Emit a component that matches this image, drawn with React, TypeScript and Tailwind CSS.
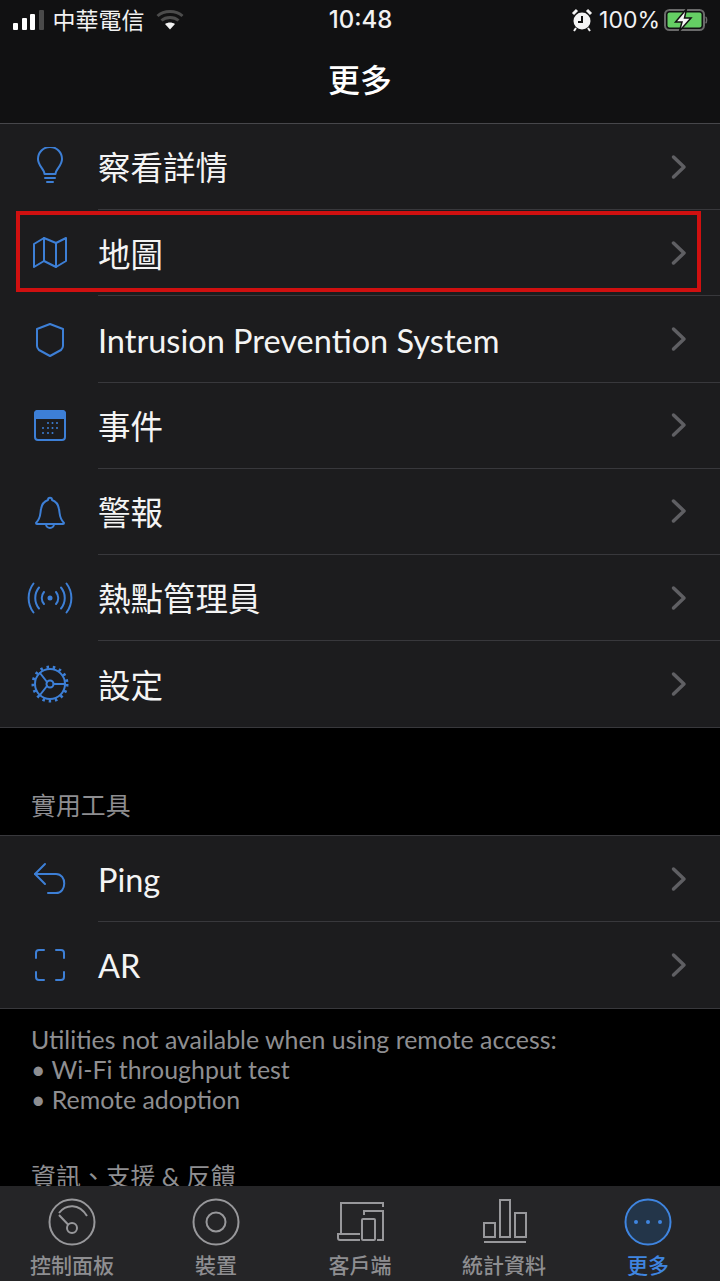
import type { ReactNode } from "react";

const cjk = "font-['Lato','Noto_Sans_CJK_TC',sans-serif]";

function Icon({ children, w = 40, h = 40 }: { children: ReactNode; w?: number; h?: number }) {
  return (
    <svg width={w} height={h} viewBox={`0 0 ${w} ${h}`} fill="none" stroke="#3d7fd6" strokeWidth="2" strokeLinecap="round" strokeLinejoin="round">
      {children}
    </svg>
  );
}

const BulbIcon = () => (
  <Icon>
    <path d="M14.500 28c0-5-6.500-8-6.500-15a12 12 0 0 1 24 0c0 7-6.500 10-6.500 15z" transform="translate(0 -1)" />
    <path d="M15 31h10M17 35h6" strokeWidth="2" />
  </Icon>
);
const MapIcon = () => (
  <Icon>
    <path d="M4 34 V11 L14 5 L26 10 L36 5 V28 L26 34 L14 28 Z" />
    <path d="M14 5 V28 M26 10 V34" />
  </Icon>
);
const ShieldIcon = () => (
  <Icon>
    <path d="M20 5 L33 10 V27 C33 29 32 30 31 31 L20 37 L9 31 C8 30 7 29 7 27 V10 Z" />
  </Icon>
);
const CalendarIcon = () => (
  <Icon>
    <rect x="5" y="5" width="30" height="29" rx="3" />
    <path d="M5 8a3 3 0 0 1 3-3h24a3 3 0 0 1 3 3v4H5z" fill="#3d7fd6" />
    <path d="M18 17h0M22.500 17h0M27 17h0M13 22h0M18 22h0M22.500 22h0M27 22h0M13 27h0M18 27h0M22.500 27h0" strokeWidth="2" />
  </Icon>
);
const BellIcon = () => (
  <Icon>
    <path d="M6 31 C11 26 10 22 11 17 C12 11 15 9 18 8 C18 5 22 5 22 8 C25 9 28 11 29 17 C30 22 29 26 34 31 C34 32 33 32 33 32 H7 C6 32 6 32 6 31 Z" />
    <path d="M16 32 a4 4 0 0 0 8 0" />
  </Icon>
);
const HotspotIcon = () => (
  <Icon w={46} h={40}>
    <circle cx="23" cy="20" r="1.500" fill="#3d7fd6" />
    <path d="M17 14c-3 3.500-3 8.500 0 12M29 14c3 3.500 3 8.500 0 12" />
    <path d="M12 9.500c-5 6-5 15 0 21M34 9.500c5 6 5 15 0 21" />
    <path d="M6.500 5.500c-6.500 8.500-6.500 20.500 0 29M39.500 5.500c6.500 8.500 6.500 20.500 0 29" />
  </Icon>
);
const GearIcon = () => (
  <Icon>
    <circle cx="20" cy="20" r="15" />
    <circle cx="20" cy="20" r="3.500" />
    <path d="M17 18 L10 9 M17 22 L10 31 M23.500 20 H35" />
    <circle cx="20" cy="20" r="17" strokeWidth="3" strokeDasharray="2.500 3.840" strokeLinecap="butt" />
  </Icon>
);
const PingIcon = () => (
  <Icon>
    <path d="M15 5 L5 15 L15 25" />
    <path d="M5 15 H26 C37 15 37 34 26 34 H18" />
  </Icon>
);
const ScanIcon = () => (
  <Icon>
    <path d="M6 13 V8 C6 6 7 5 9 5 H14 M26 5 H31 C33 5 34 6 34 8 V13 M34 27 V32 C34 34 33 35 31 35 H26 M14 35 H9 C7 35 6 34 6 32 V27" />
  </Icon>
);

function Chevron() {
  return (
    <svg width="16" height="26" viewBox="0 0 16 26" fill="none" stroke="#5f5f63" strokeWidth="3.500" strokeLinecap="round" strokeLinejoin="round">
      <path d="M2.500 3 L13 13 L2.500 23" />
    </svg>
  );
}

function Row({ icon, label }: { icon: ReactNode; label: string }) {
  return (
    <div className="group flex h-[86.200px] items-stretch">
      <div className="-mr-[2px] flex w-[100px] shrink-0 items-center justify-center">{icon}</div>
      <div className="flex flex-1 items-center justify-between border-b border-[#38383c] pr-[33px] group-last:border-b-0">
        <span className="translate-y-[2px] text-[32.500px] leading-none text-[#f4f4f4]">{label}</span>
        <Chevron />
      </div>
    </div>
  );
}

function TabIcon({ children }: { children: ReactNode }) {
  return (
    <svg width="48" height="48" viewBox="0 0 48 48" fill="none" stroke="#98989b" strokeWidth="2">
      {children}
    </svg>
  );
}

function Tab({ icon, label, active }: { icon: ReactNode; label: string; active?: boolean }) {
  return (
    <div className="flex flex-1 flex-col items-center">
      {icon}
      <span className={`mt-[5px] text-[21px] leading-[28px] font-medium ${active ? "text-[#3f85e0]" : "text-[#8e8e91]"}`}>{label}</span>
    </div>
  );
}

export default function App() {
  return (
    <div className={`relative flex h-[1281px] w-[720px] flex-col overflow-hidden bg-black ${cjk}`}>
      {/* 상단 */}
      <header className="h-[124px] shrink-0 border-b border-[#47474b] bg-[#111112]">
        <div className="flex h-[40px] items-center justify-between pl-[13px] pr-[12px] text-[#f2f2f2]">
          <div className="flex w-[240px] items-center">
            <div className="flex items-end gap-[3.500px]">
              <span className="h-[7px] w-[5px] rounded-[1px] bg-white" />
              <span className="h-[12px] w-[5px] rounded-[1px] bg-white" />
              <span className="h-[16px] w-[5px] rounded-[1px] bg-white" />
              <span className="h-[20px] w-[5px] rounded-[1px] bg-[#4a4a4a]" />
            </div>
            <span className="ml-[9px] text-[23px] leading-none">中華電信</span>
            <svg width="28" height="22" viewBox="0 0 28 22" className="ml-[11px]" fill="none">
              <path d="M1.500 7 C8 1 20 1 26.500 7 M5.500 11.500 C10 7.500 18 7.500 22.500 11.500" stroke="#4c4c4c" strokeWidth="3" />
              <path d="M9 15 L14 20.500 L19 15 C16 13 12 13 9 15 Z" fill="#f2f2f2" />
            </svg>
          </div>
          <span className="text-[24px] leading-none font-['Inter',sans-serif] font-medium">10:48</span>
          <div className="flex w-[240px] items-center justify-end">
            <svg width="22" height="26" viewBox="0 0 22 26">
              <circle cx="11" cy="14" r="8.500" fill="#f4f4f4" />
              <path d="M2 7 L6 3 M20 7 L16 3" stroke="#f4f4f4" strokeWidth="3" />
              <path d="M3 24 L5 21 M19 24 L17 21" stroke="#f4f4f4" strokeWidth="2" />
              <path d="M11 9 V15 H7" stroke="#111" strokeWidth="2" fill="none" />
            </svg>
            <span className="ml-[6px] text-[23px] leading-none font-['Inter',sans-serif]">100%</span>
            <svg width="46" height="24" viewBox="0 0 46 24" className="ml-[2px]">
              <rect x="3" y="2" width="39" height="20" rx="4.500" fill="none" stroke="#6a6a6a" strokeWidth="2" />
              <rect x="5.500" y="4.500" width="34" height="15" rx="2" fill="#65cf64" />
              <path d="M43.500 9 C45 9.500 45 14.500 43.500 15" stroke="#6a6a6a" strokeWidth="1.500" fill="none" />
              <path d="M24.500 1 L13.500 14 H20 L17.500 23 L29 10 H22.500 Z" fill="#f4f4f4" stroke="#111" strokeWidth="1.500" />
            </svg>
          </div>
        </div>
        <h1 className="mt-[18px] text-center text-[32px] leading-[44px] font-medium text-white">更多</h1>
      </header>

      <main className="min-h-0 flex-1 overflow-hidden">
        <section className="border-b border-[#38383c] bg-[#1c1c1e]">
          <Row icon={<BulbIcon />} label="察看詳情" />
          <Row icon={<MapIcon />} label="地圖" />
          <Row icon={<ShieldIcon />} label="Intrusion Prevention System" />
          <Row icon={<CalendarIcon />} label="事件" />
          <Row icon={<BellIcon />} label="警報" />
          <Row icon={<HotspotIcon />} label="熱點管理員" />
          <Row icon={<GearIcon />} label="設定" />
        </section>

        <p className="mt-[60px] pl-[31px] text-[24.900px] leading-[34px] text-[#8e8e91]">實用工具</p>

        <section className="mt-[13px] border-y border-[#38383c] bg-[#1c1c1e] [&>div]:h-[85.600px]">
          <Row icon={<PingIcon />} label="Ping" />
          <Row icon={<ScanIcon />} label="AR" />
        </section>

        <div className="mt-[15px] pl-[31px] text-[24.900px] leading-[30px] text-[#8e8e91]">
          <p>Utilities not available when using remote access:</p>
          <p>• Wi-Fi throughput test</p>
          <p>• Remote adoption</p>
        </div>

        <p className="mt-[45px] pl-[31px] text-[24.900px] leading-[34px] text-[#8e8e91]">資訊、支援 &amp; 反饋</p>
      </main>

      <nav className="flex h-[95px] shrink-0 bg-[#252527] pt-[12px]">
        <Tab
          label="控制面板"
          icon={
            <TabIcon>
              <circle cx="24" cy="24" r="22.500" />
              <circle cx="24" cy="30" r="5" />
              <path d="M20.500 27 L11 17 M11 15 C18 6 31 5 39 18" />
            </TabIcon>
          }
        />
        <Tab
          label="裝置"
          icon={
            <TabIcon>
              <circle cx="24" cy="24" r="22.500" />
              <circle cx="24" cy="24" r="9.500" />
            </TabIcon>
          }
        />
        <Tab
          label="客戶端"
          icon={
            <TabIcon>
              <path d="M5 36 V5 H47 V9" />
              <path d="M28 17 V13 H47 V42 H41" />
              <rect x="26" y="21" width="13" height="21" rx="1" />
              <path d="M24 36 H2 V40 C2 41 3 42 4 42 H24" />
            </TabIcon>
          }
        />
        <Tab
          label="統計資料"
          icon={
            <TabIcon>
              <rect x="4" y="25" width="11" height="14" />
              <rect x="20" y="2" width="10" height="37" />
              <rect x="35" y="15" width="11" height="24" />
              <path d="M4 44 H46" />
            </TabIcon>
          }
        />
        <Tab
          active
          label="更多"
          icon={
            <svg width="48" height="48" viewBox="0 0 48 48">
              <circle cx="24" cy="24" r="22.500" fill="#233549" stroke="#3f85e0" strokeWidth="2" />
              <circle cx="12" cy="24" r="2" fill="#3f85e0" />
              <circle cx="24" cy="24" r="2" fill="#3f85e0" />
              <circle cx="36" cy="24" r="2" fill="#3f85e0" />
            </svg>
          }
        />
      </nav>

      {/* 빨간 강조 박스 */}
      <div className="absolute top-[211px] left-[16px] h-[81px] w-[685px] border-[4px] border-[#cf1010]" />
    </div>
  );
}
